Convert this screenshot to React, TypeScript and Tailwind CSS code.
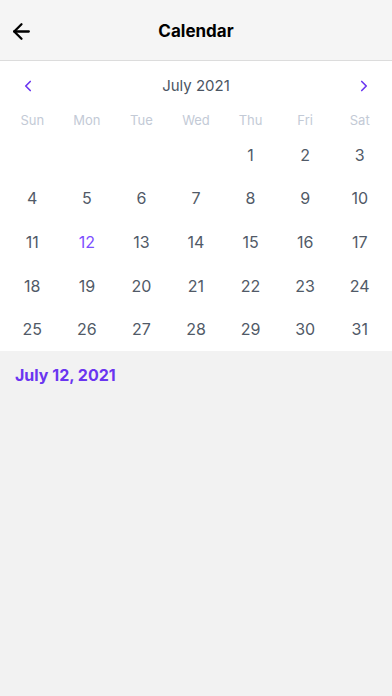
import { ChevronLeft, ChevronRight, ArrowLeft } from 'lucide-react';

const dayNames = ['Sun', 'Mon', 'Tue', 'Wed', 'Thu', 'Fri', 'Sat'];

function App() {
  // July 2021 starts on a Thursday
  const cells: (number | null)[] = [null, null, null, null];
  for (let d = 1; d <= 31; d++) cells.push(d);

  return (
    <div className="min-h-[696px] bg-[#f2f2f2] font-['Inter',sans-serif]">
      {/* Header */}
      <div className="relative h-[61px] bg-[#f5f5f5] border-b border-[#dcdcdc] flex items-center justify-center pt-[3px]">
        <button className="absolute left-[9px] top-[19px] text-black">
          <ArrowLeft className="h-[25px] w-[25px]" strokeWidth={2.2} />
        </button>
        <h1 className="text-[17px] font-bold text-black">Calendar</h1>
      </div>

      {/* Calendar */}
      <div className="bg-white px-[5px]">
        <div className="flex items-center justify-between h-[48px] pt-[2px] px-[14px]">
          <ChevronLeft className="h-[18px] w-[18px] text-[#6a35f0]" strokeWidth={2.2} />
          <span className="text-[15px] text-[#4b5563]">July 2021</span>
          <ChevronRight className="h-[18px] w-[18px] text-[#6a35f0]" strokeWidth={2.2} />
        </div>
        <div className="grid grid-cols-7 h-[24px] items-center">
          {dayNames.map(name => (
            <div key={name} className="text-center text-[13px] text-[#c3cad6]">{name}</div>
          ))}
        </div>
        <div className="grid grid-cols-7">
          {cells.map((d, i) => (
            <div
              key={i}
              className={`h-[43.6px] flex items-center justify-center text-[16px] ${
                d === 12 ? 'text-[#7c4dff]' : 'text-[#515a67]'
              }`}
            >
              {d ?? ''}
            </div>
          ))}
        </div>
      </div>

      {/* Selected date */}
      <div className="px-[15px] pt-[12px]">
        <span className="text-[16px] font-bold text-[#6a35f0]">July 12, 2021</span>
      </div>
    </div>
  );
}

export default App;
